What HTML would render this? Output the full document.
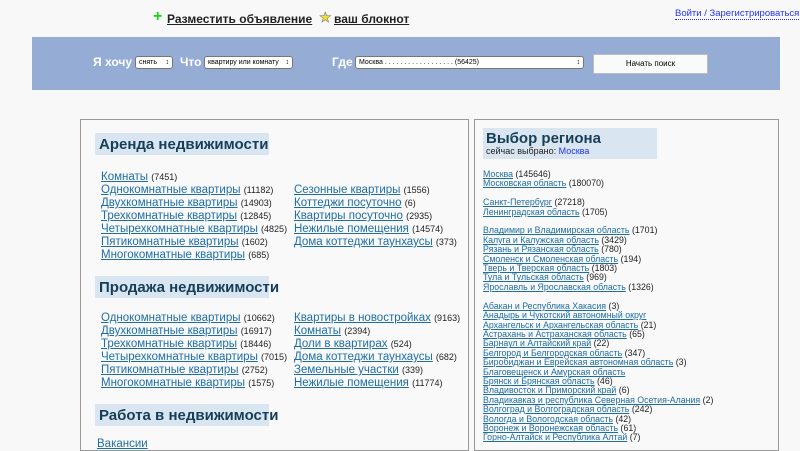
<!DOCTYPE html>
<html><head><meta charset="utf-8"><style>
body{margin:0;width:800px;height:442px;overflow:hidden;background:#f8f8f8;font-family:"Liberation Sans",sans-serif;position:relative}
.a{position:absolute;white-space:nowrap}
.lnk{color:#1f6ea3;text-decoration:underline}
.top{font-size:12px;font-weight:bold;color:#222;text-decoration:underline}
.bar{position:absolute;left:32px;top:37px;width:748px;height:53px;background:#95add5}
.lbl{color:#fff;font-weight:bold;font-size:12px}
.sel{position:absolute;height:11px;background:#fff;border:1px solid #777;border-radius:3px;font-size:7px;line-height:11px;padding-left:3px;box-sizing:content-box;white-space:nowrap;overflow:hidden}
.sel:after{content:"\2195";position:absolute;right:3px;top:0;font-size:7px}
.panel{position:absolute;border:1px solid #999;background:#f9f9f9}
.h{position:absolute;background:#d9e6f1;color:#173e57;font-weight:bold;font-size:15px;padding-left:4px;box-sizing:border-box;white-space:nowrap}
.list{position:absolute;font-size:11.5px;line-height:13px;white-space:nowrap}
.list span{font-size:9px;color:#222}
.rl{position:absolute;left:483px;font-size:8.8px;line-height:9.4px;white-space:nowrap}
.rl span{color:#222}
</style></head><body>
<div class="a" style="left:153px;top:8px;color:#1ed21e;font-size:16px;font-weight:bold">+</div>
<div class="a top" style="left:167px;top:12px">Разместить объявление</div>
<div class="a" style="left:319px;top:9px;color:#f0e030;font-size:14px;-webkit-text-stroke:0.5px #666">★</div>
<div class="a top" style="left:334px;top:12px">ваш блокнот</div>
<div class="a" style="left:675px;top:8px;font-size:9.5px;color:#2233ee;border-bottom:1px dotted #2233ee">Войти / Зарегистрироваться</div>

<div class="bar"></div>
<div class="a lbl" style="left:93px;top:55px">Я хочу</div>
<div class="sel" style="left:135px;top:56px;width:33px">снять</div>
<div class="a lbl" style="left:180px;top:55px">Что</div>
<div class="sel" style="left:204px;top:56px;width:84px">квартиру или комнату</div>
<div class="a lbl" style="left:332px;top:55px">Где</div>
<div class="sel" style="left:355px;top:56px;width:224px">Москва . . . . . . . . . . . . . . . . . . (56425)</div>
<div class="a" style="left:593px;top:54px;width:113px;height:18px;background:#fafafa;border:1px solid #bbb;font-size:8px;text-align:center;line-height:18px">Начать поиск</div>

<div class="panel" style="left:80px;top:119px;width:387px;height:330px"></div>
<div class="panel" style="left:474px;top:119px;width:303px;height:330px"></div>

<div class="h" style="left:95px;top:133px;width:174px;height:22px;line-height:23px">Аренда недвижимости</div>
<div class="list" style="left:101px;top:171px"><a class="lnk">Комнаты</a> <span>(7451)</span><br><a class="lnk">Однокомнатные квартиры</a> <span>(11182)</span><br><a class="lnk">Двухкомнатные квартиры</a> <span>(14903)</span><br><a class="lnk">Трехкомнатные квартиры</a> <span>(12845)</span><br><a class="lnk">Четырехкомнатные квартиры</a> <span>(4825)</span><br><a class="lnk">Пятикомнатные квартиры</a> <span>(1602)</span><br><a class="lnk">Многокомнатные квартиры</a> <span>(685)</span></div>
<div class="list" style="left:294px;top:184px"><a class="lnk">Сезонные квартиры</a> <span>(1556)</span><br><a class="lnk">Коттеджи посуточно</a> <span>(6)</span><br><a class="lnk">Квартиры посуточно</a> <span>(2935)</span><br><a class="lnk">Нежилые помещения</a> <span>(14574)</span><br><a class="lnk">Дома коттеджи таунхаусы</a> <span>(373)</span></div>

<div class="h" style="left:95px;top:276px;width:174px;height:22px;line-height:23px">Продажа недвижимости</div>
<div class="list" style="left:101px;top:312px"><a class="lnk">Однокомнатные квартиры</a> <span>(10662)</span><br><a class="lnk">Двухкомнатные квартиры</a> <span>(16917)</span><br><a class="lnk">Трехкомнатные квартиры</a> <span>(18446)</span><br><a class="lnk">Четырехкомнатные квартиры</a> <span>(7015)</span><br><a class="lnk">Пятикомнатные квартиры</a> <span>(2752)</span><br><a class="lnk">Многокомнатные квартиры</a> <span>(1575)</span></div>
<div class="list" style="left:294px;top:312px"><a class="lnk">Квартиры в новостройках</a> <span>(9163)</span><br><a class="lnk">Комнаты</a> <span>(2394)</span><br><a class="lnk">Доли в квартирах</a> <span>(524)</span><br><a class="lnk">Дома коттеджи таунхаусы</a> <span>(682)</span><br><a class="lnk">Земельные участки</a> <span>(339)</span><br><a class="lnk">Нежилые помещения</a> <span>(11774)</span></div>

<div class="h" style="left:95px;top:404px;width:174px;height:22px;line-height:23px">Работа в недвижимости</div>
<div class="list" style="left:97px;top:438px"><a class="lnk">Вакансии</a></div>

<div class="h" style="left:483px;top:128px;width:174px;height:31px;padding-left:3px"><div style="font-size:15px;line-height:15px;margin-top:3px">Выбор региона</div><div style="font-size:9px;font-weight:normal;color:#222;line-height:11px">сейчас выбрано: <span style="color:#2233ee">Москва</span></div></div>

<div class="rl" style="top:170px"><a class="lnk">Москва</a> <span>(145646)</span><br><a class="lnk">Московская область</a> <span>(180070)</span><br><br><a class="lnk">Санкт-Петербург</a> <span>(27218)</span><br><a class="lnk">Ленинградская область</a> <span>(1705)</span><br><br><a class="lnk">Владимир и Владимирская область</a> <span>(1701)</span><br><a class="lnk">Калуга и Калужская область</a> <span>(3429)</span><br><a class="lnk">Рязань и Рязанская область</a> <span>(780)</span><br><a class="lnk">Смоленск и Смоленская область</a> <span>(194)</span><br><a class="lnk">Тверь и Тверская область</a> <span>(1803)</span><br><a class="lnk">Тула и Тульская область</a> <span>(969)</span><br><a class="lnk">Ярославль и Ярославская область</a> <span>(1326)</span><br><br><a class="lnk">Абакан и Республика Хакасия</a> <span>(3)</span><br><a class="lnk">Анадырь и Чукотский автономный округ</a><br><a class="lnk">Архангельск и Архангельская область</a> <span>(21)</span><br><a class="lnk">Астрахань и Астраханская область</a> <span>(65)</span><br><a class="lnk">Барнаул и Алтайский край</a> <span>(22)</span><br><a class="lnk">Белгород и Белгородская область</a> <span>(347)</span><br><a class="lnk">Биробиджан и Еврейская автономная область</a> <span>(3)</span><br><a class="lnk">Благовещенск и Амурская область</a><br><a class="lnk">Брянск и Брянская область</a> <span>(46)</span><br><a class="lnk">Владивосток и Приморский край</a> <span>(6)</span><br><a class="lnk">Владикавказ и республика Северная Осетия-Алания</a> <span>(2)</span><br><a class="lnk">Волгоград и Волгоградская область</a> <span>(242)</span><br><a class="lnk">Вологда и Вологодская область</a> <span>(42)</span><br><a class="lnk">Воронеж и Воронежская область</a> <span>(61)</span><br><a class="lnk">Горно-Алтайск и Республика Алтай</a> <span>(7)</span></div>
</body></html>
